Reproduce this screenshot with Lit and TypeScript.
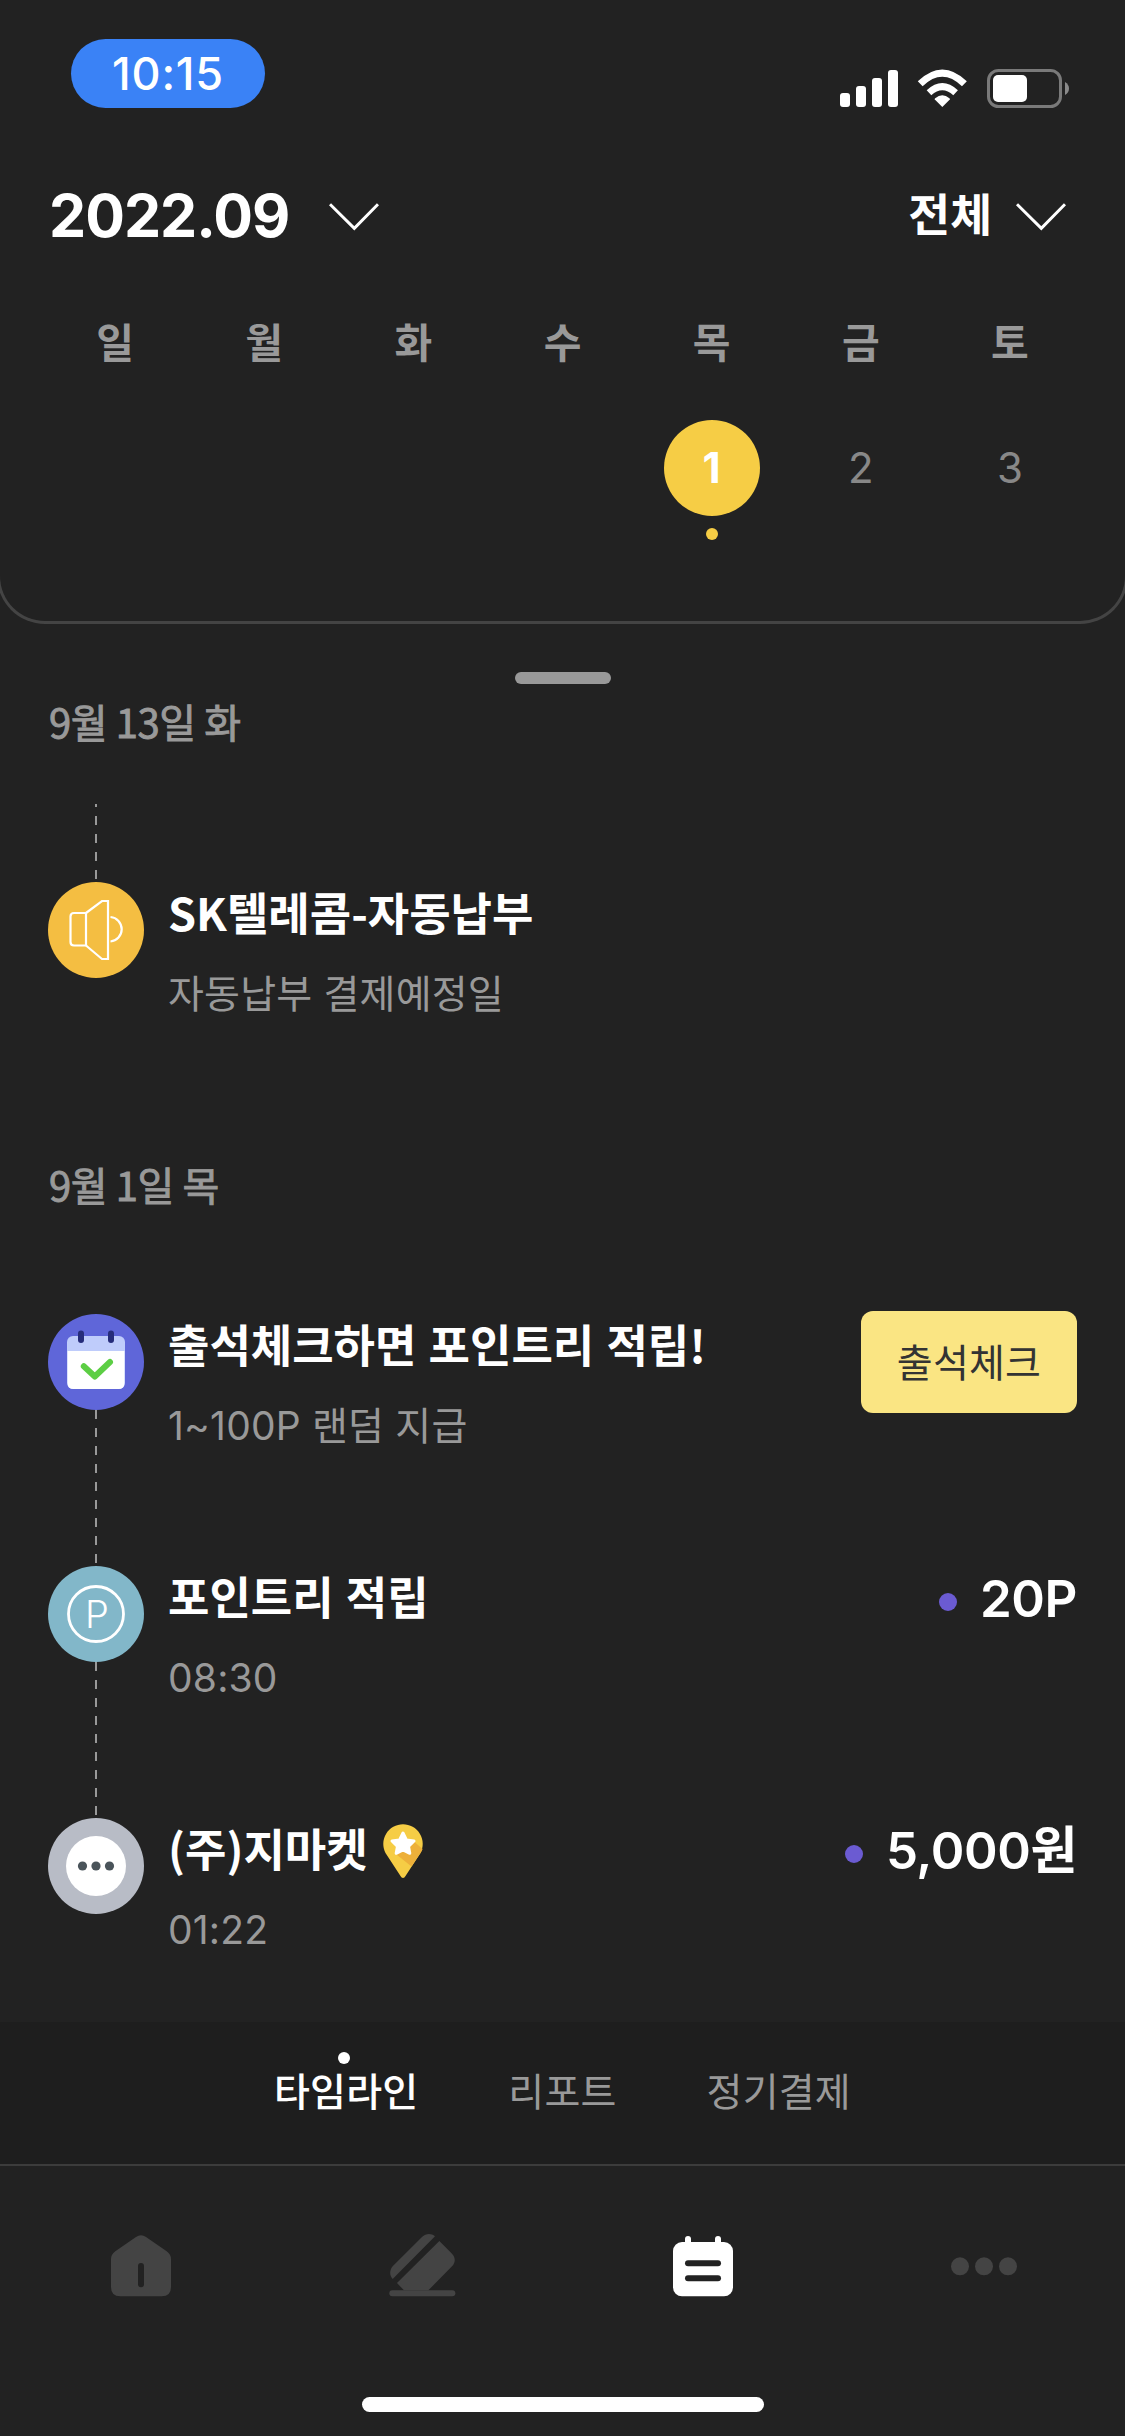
import { LitElement, html, svg, css, nothing, TemplateResult } from "lit";
import { customElement, property } from "lit/decorators.js";
import { classMap } from "lit/directives/class-map.js";

type IconName = "speaker" | "attendance" | "point" | "more";

interface Entry {
  icon: IconName;
  title: string;
  sub: string;
  badge?: boolean;
  amount?: string;
  action?: string;
  linked?: boolean;
}

const weekdays = ["일", "월", "화", "수", "목", "금", "토"];
const days = [null, null, null, null, 1, 2, 3];

const firstDay: Entry[] = [
  { icon: "attendance", title: "출석체크하면 포인트리 적립!", sub: "1~100P 랜덤 지급", action: "출석체크", linked: true },
  { icon: "point", title: "포인트리 적립", sub: "08:30", amount: "20P", linked: true },
  { icon: "more", title: "(주)지마켓", sub: "01:22", badge: true, amount: "5,000원" },
];

const icons: Record<IconName, TemplateResult> = {
  speaker: svg`
    <circle cx="48" cy="48" r="48" fill="#f4be42"/>
    <g fill="none" stroke="#fff" stroke-width="2.2">
      <path d="M38 31H26Q22.5 31 22.5 34.5V60Q22.5 63.5 26 63.5H38Z"/>
      <path d="M38 31L54 19H60V77H54L38 63.5"/>
      <path d="M62.5 35A12.3 12.3 0 0 1 62.5 59.5"/>
    </g>`,
  attendance: svg`
    <circle cx="48" cy="48" r="48" fill="#5f66d9"/>
    <rect x="19" y="22" width="58" height="53" rx="6" fill="#bfccfb"/>
    <path d="M19.6 37H76.4V69Q76.4 75 70.4 75H25.6Q19.6 75 19.6 69Z" fill="#fff"/>
    <rect x="30" y="16.5" width="6" height="12.5" rx="3" fill="#262c7a"/>
    <rect x="60" y="16.5" width="6" height="12.5" rx="3" fill="#262c7a"/>
    <path d="M35.8 52.3L46.8 62.5L62 48" fill="none" stroke="#5cce44" stroke-width="6" stroke-linecap="round" stroke-linejoin="round"/>`,
  point: svg`
    <circle cx="48" cy="48" r="48" fill="#82b7c9"/>
    <circle cx="48" cy="48" r="27.5" fill="none" stroke="#fff" stroke-width="2.8"/>
    <text x="49" y="62" text-anchor="middle" fill="#fff" font-family="Inter, sans-serif" font-weight="300" font-size="38">P</text>`,
  more: svg`
    <circle cx="48" cy="48" r="48" fill="#b8bcc6"/>
    <circle cx="48" cy="48" r="30" fill="#fff"/>
    <circle cx="34.5" cy="48" r="4.6" fill="#4a545a"/>
    <circle cx="48" cy="48" r="4.6" fill="#4a545a"/>
    <circle cx="61.5" cy="48" r="4.6" fill="#4a545a"/>`,
};

const chevron = html`<svg class="chevron" width="50" height="28" viewBox="0 0 50 28">
  <path d="M1 1.2L25.3 25.4L49 1.2" fill="none" stroke="#fff" stroke-width="3"/>
</svg>`;

@customElement("status-bar")
export class StatusBar extends LitElement {
  static styles = css`
    :host { display: flex; justify-content: space-between; height: 108px; box-sizing: border-box; padding: 39px 56px 0 71px; }
    .time {
      width: 194px; height: 69px; border-radius: 34.5px; background: #3a82f6; color: #fff;
      font: 450 45px/69px Inter, sans-serif; text-align: center; letter-spacing: 0.8px;
    }
    .icons { padding-top: 30px; }
    svg { display: block; }
  `;
  render() {
    return html`
      <div class="time">10:15</div>
      <div class="icons">
        <svg width="229" height="39" viewBox="0 0 229 39" fill="#fff">
          <rect x="0" y="24" width="10" height="14" rx="3"/>
          <rect x="16" y="17" width="10" height="21" rx="3"/>
          <rect x="32" y="9" width="10" height="29" rx="3"/>
          <rect x="48" y="1" width="10" height="37" rx="3"/>
          <path d="M102.300 38L94.800 30.500Q94.500 29.800 95.200 29.200Q102.300 23.200 109.400 29.200Q110.100 29.800 109.800 30.500Z"/>
          <path d="M89 23.800Q102.300 11.500 115.600 23.800" fill="none" stroke="#fff" stroke-width="6.800"/>
          <path d="M80.200 14.800Q102.300 -6.500 124.400 14.800" fill="none" stroke="#fff" stroke-width="7"/>
          <rect x="148.500" y="1.500" width="72" height="36" rx="10" fill="none" stroke="#7a7a7a" stroke-width="3"/>
          <rect x="153" y="6" width="34" height="27" rx="5"/>
          <path d="M225 13Q229 15.500 229 19.500Q229 23.500 225 26Z" fill="#8a8a8a"/>
        </svg>
      </div>`;
  }
}

@customElement("month-calendar")
export class MonthCalendar extends LitElement {
  static styles = css`
    :host { display: block; }
    .panel {
      height: 516px; box-sizing: border-box; margin: 0 -3px; padding: 66px 3px 0;
      border: 3px solid #444; border-top: 0; border-radius: 0 0 48px 48px;
    }
    .head { display: flex; justify-content: space-between; align-items: center; height: 84px; padding: 0 56px 0 46px; }
    .pick { display: flex; align-items: center; color: #fff; }
    .month { font: 700 59px/84px Inter, sans-serif; letter-spacing: -1px; margin-right: 40px; }
    .filter { font: 700 45.5px/77px "Noto Sans CJK KR", sans-serif; height: 84px; margin-right: 24px; }
    .chevron { display: block; margin-top: 2px; }
    .week { display: grid; grid-template-columns: repeat(7, 1fr); padding: 0 37.5px; text-align: center; }
    .names { font: 700 41px/60px "Noto Sans CJK KR", sans-serif; color: #999; height: 60px; margin-top: 52px; }
    .days { margin-top: 50px; font: 400 42px/96px Inter, sans-serif; color: #888; }
    .day { display: flex; flex-direction: column; align-items: center; gap: 12px; }
    .num { width: 96px; height: 96px; border-radius: 50%; }
    .today .num { background: #f6cd45; color: #fff; font-weight: 700; }
    .mark { width: 12px; height: 12px; border-radius: 50%; background: #f6cd45; }
  `;
  render() {
    return html`
      <div class="panel">
        <div class="head">
          <div class="pick"><span class="month">2022.09</span>${chevron}</div>
          <div class="pick"><span class="filter">전체</span>${chevron}</div>
        </div>
        <div class="week names">${weekdays.map((d) => html`<span>${d}</span>`)}</div>
        <div class="week days">
          ${days.map((d) => html`
            <div class=${classMap({ day: true, today: d === 1 })}>
              ${d ? html`<span class="num">${d}</span>` : nothing}
              ${d === 1 ? html`<span class="mark"></span>` : nothing}
            </div>`)}
        </div>
      </div>`;
  }
}

@customElement("timeline-entry")
export class TimelineEntry extends LitElement {
  @property({ attribute: false }) entry!: Entry;
  static styles = css`
    :host { display: flex; gap: 24px; height: 252px; font-family: "Noto Sans CJK KR", sans-serif; }
    svg { display: block; }
    .rail { display: flex; flex-direction: column; align-items: center; width: 96px; flex: none; }
    .body { flex: 1; white-space: nowrap; }
    .title { display: flex; align-items: center; gap: 15px; height: 60px; font-size: 45px; font-weight: 700; line-height: 60px; word-spacing: 2px; color: #fff; }
    .pin { margin-top: 5px; }
    .sub { height: 54px; margin-top: 25px; font: 400 39px/54px Inter, "Noto Sans CJK KR", sans-serif; letter-spacing: 0.2px; color: #999; }
    .side { flex: none; }
    .amount { display: flex; align-items: center; gap: 23px; height: 65px; font: 600 51px/65px Inter, "Noto Sans CJK KR", sans-serif; letter-spacing: -0.4px; color: #fff; }
    .dot { width: 18px; height: 18px; margin-top: 7px; border-radius: 50%; background: #6b5bd2; }
    .action {
      width: 216px; height: 102px; margin-top: -3px; padding: 0 0 5px; border: 0; border-radius: 12px; background: #fae583; color: #333;
      font: 400 39px/94px "Noto Sans CJK KR", sans-serif; letter-spacing: 0.2px;
    }
  `;
  render() {
    const e = this.entry;
    return html`
      <div class="rail">
        <svg width="96" height="96" viewBox="0 0 96 96">${icons[e.icon]}</svg>
        ${e.linked
          ? html`<svg width="2" height="156" viewBox="0 0 2 156"><path d="M1 0V156" stroke="#999" stroke-width="2" stroke-dasharray="9 9"/></svg>`
          : nothing}
      </div>
      <div class="body">
        <div class="title">
          <span>${e.title}</span>
          ${e.badge
            ? html`<svg class="pin" width="40" height="54" viewBox="0 0 40 54">
                <path d="M20 54Q18.500 54 17.500 52L2.500 29A19.700 19.700 0 1 1 37.500 29L22.500 52Q21.500 54 20 54Z" fill="#f6cd45"/>
                <path d="M31.500 18L39.600 25Q39 27 37.500 29L28.500 42.500L13.500 30.500Z" fill="#edb03a"/>
                <path d="M20 9L23.400 15.900L31 17L25.500 22.300L26.800 29.300L20 26L13.200 29.300L14.500 22.300L9 17L16.600 15.900Z" fill="#fff" stroke="#fff" stroke-width="3" stroke-linejoin="round"/>
              </svg>`
            : nothing}
        </div>
        <div class="sub">${e.sub}</div>
      </div>
      <div class="side">
        ${e.amount ? html`<div class="amount"><span class="dot"></span><span>${e.amount}</span></div>` : nothing}
        ${e.action ? html`<button class="action">${e.action}</button>` : nothing}
      </div>`;
  }
}

@customElement("bottom-nav")
export class BottomNav extends LitElement {
  static styles = css`
    :host { display: block; }
    .tabs {
      display: flex; box-sizing: border-box; height: 144px; padding: 30px 0 0 274px; gap: 90px; background: #1e1e1e; border-bottom: 2px solid #3c3c3c;
      font: 400 39px/58px "Noto Sans CJK KR", sans-serif; letter-spacing: 0.2px; color: #999;
    }
    .tab { display: flex; flex-direction: column; align-items: center; }
    .mark { width: 12px; height: 12px; border-radius: 50%; margin: 0 4px -4px 0; }
    .active { color: #fff; font-weight: 500; }
    .active .mark { background: #fff; }
    .nav { display: grid; grid-template-columns: repeat(4, 1fr); height: 231px; justify-items: center; box-sizing: border-box; padding-top: 67px; }
    svg { display: block; }
    .bar { width: 402px; height: 15px; border-radius: 7.5px; background: #fff; margin: 0 auto; }
  `;
  render() {
    return html`
      <div class="tabs">
        <div class="tab active"><span class="mark"></span><span>타임라인</span></div>
        <div class="tab"><span class="mark"></span><span>리포트</span></div>
        <div class="tab"><span class="mark"></span><span>정기결제</span></div>
      </div>
      <div class="nav">
        <svg width="66" height="64" viewBox="84 68 198 192">
          <path d="M168 80Q183 69 198 80L260 123Q273 132 273 147V230Q273 258 245 258H121Q93 258 93 230V147Q93 132 106 123Z" fill="#444"/>
          <rect x="174" y="158" width="18" height="73" rx="9" fill="#222"/>
        </svg>
        <svg width="68" height="64" viewBox="926 68 204 192" fill="#444">
          <path d="M940 206C930 196 930 180 940 168L1028 80C1040 68 1056 68 1067 78Z"/>
          <path d="M1080 92L1118 130C1129 141 1129 157 1118 168L1047 240H974L953 218Z"/>
          <rect x="930" y="240" width="198" height="18" rx="9"/>
        </svg>
        <svg width="66" height="64" viewBox="90 68 198 192" fill="#fff">
          <rect x="99" y="95" width="180" height="163" rx="27"/>
          <rect x="135" y="77" width="18" height="40" rx="9"/>
          <rect x="225" y="77" width="18" height="40" rx="9"/>
          <rect x="135" y="150" width="108" height="18" rx="9" fill="#222"/>
          <rect x="135" y="195" width="108" height="18" rx="9" fill="#222"/>
        </svg>
        <svg width="66" height="64" viewBox="933 68 198 192" fill="#444">
          <circle cx="960" cy="168" r="27"/><circle cx="1032" cy="168" r="27"/><circle cx="1104" cy="168" r="27"/>
        </svg>
      </div>
      <div class="bar"></div>`;
  }
}

@customElement("app-root")
export class AppRoot extends LitElement {
  static styles = css`
    :host { display: flex; flex-direction: column; width: 1125px; height: 2436px; overflow: hidden; background: #222; }
    .timeline { height: 1398px; box-sizing: border-box; padding: 48px 48px 0; overflow: hidden; }
    .handle { width: 96px; height: 12px; border-radius: 6px; background: #999; margin: 0 auto; }
    .date { height: 60px; padding-left: 1px; font: 400 40px/60px "Noto Sans CJK KR", sans-serif; letter-spacing: -0.4px; color: #999; -webkit-text-stroke: 0.9px #999; }
    .first { margin-top: 7px; }
    .lead { display: block; width: 96px; margin-top: 53px; }
    .second { margin: 20px 0 100px; }
    bottom-nav { height: 414px; }
  `;
  render() {
    return html`
      <status-bar></status-bar>
      <month-calendar></month-calendar>
      <div class="timeline">
        <div class="handle"></div>
        <div class="date first">9월 13일 화</div>
        <svg class="lead" width="96" height="78" viewBox="0 0 96 78">
          <path d="M48 0V78" stroke="#999" stroke-width="2" stroke-dasharray="9 9" stroke-dashoffset="6"/>
        </svg>
        <timeline-entry .entry=${{ icon: "speaker", title: "SK텔레콤-자동납부", sub: "자동납부 결제예정일" } as Entry}></timeline-entry>
        <div class="date second">9월 1일 목</div>
        ${firstDay.map((e) => html`<timeline-entry .entry=${e}></timeline-entry>`)}
      </div>
      <bottom-nav></bottom-nav>`;
  }
}
